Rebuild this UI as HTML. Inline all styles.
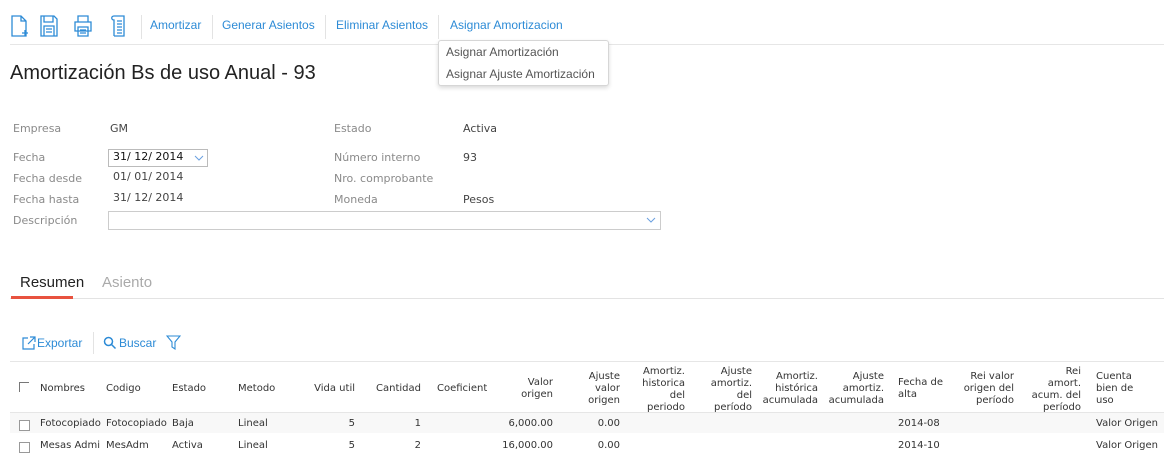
<!DOCTYPE html><html><head><meta charset="utf-8"><style>
*{margin:0;padding:0;box-sizing:border-box}
body{width:1164px;height:455px;overflow:hidden;background:#fff;position:relative;font-family:"Liberation Sans",sans-serif}
.a{position:absolute;white-space:nowrap}
.tb{font-size:12px;color:#2d8bd6;top:18px}
.sep{position:absolute;width:1px;background:#e3e3e3}
.lb{font-family:"DejaVu Sans",sans-serif;font-size:11px;color:#8a8a8a}
.vl{font-family:"DejaVu Sans",sans-serif;font-size:11px;color:#444}
.t{font-family:"DejaVu Sans",sans-serif;font-size:10px;color:#333;line-height:12px}
.r{text-align:right}
.cb{position:absolute;width:11px;height:11px;border:1px solid #999;background:#fff}
</style></head><body>
<!-- icons -->
<svg class="a" style="left:10px;top:14px" width="125" height="24" viewBox="0 0 125 24" fill="none" stroke="#2d8bd6" stroke-width="1.3">
<path d="M2 2h9l5 5v15H2z M11 2v5h5"/><path d="M12 19h6M15 16v6"/>
<path d="M31 2h13l3 3v17H31z M34 2v6h9V2 M34 12h10v10H34z M36 15h6M36 18h6"/>
<path d="M68 2h10v6H68z M65 8h16v9H65z M68 13h10v9H68z M70 16h6M70 19h6"/>
<path d="M104 2h10v20h-10 M104 2c-3 0-3 4 0 4v16 M107 7h5M107 10h5M107 13h5M107 16h5M107 19h5"/>
</svg>
<div class="sep" style="left:141px;top:15px;height:24px"></div>
<div class="a tb" style="left:150px">Amortizar</div>
<div class="sep" style="left:212px;top:15px;height:24px"></div>
<div class="a tb" style="left:222px">Generar Asientos</div>
<div class="sep" style="left:325px;top:15px;height:24px"></div>
<div class="a tb" style="left:336px">Eliminar Asientos</div>
<div class="sep" style="left:438px;top:15px;height:24px"></div>
<div class="a tb" style="left:450px">Asignar Amortizacion</div>
<div class="a" style="left:10px;top:44px;width:1154px;height:1px;background:#e6e6e6"></div>
<div class="a" style="left:438px;top:40px;width:171px;height:46px;border:1px solid #d6d6d6;border-radius:3px;background:#fff;box-shadow:0 2px 4px rgba(0,0,0,.15)"></div>
<div class="a" style="left:446px;top:45px;font-size:12px;color:#555">Asignar Amortización</div>
<div class="a" style="left:446px;top:67px;font-size:12px;color:#555">Asignar Ajuste Amortización</div>
<div class="a" style="left:10px;top:62px;font-size:20px;color:#222">Amortización Bs de uso Anual - 93</div>
<!-- form -->
<div class="a lb" style="left:13px;top:122px">Empresa</div><div class="a vl" style="left:110px;top:122px">GM</div>
<div class="a lb" style="left:334px;top:122px">Estado</div><div class="a vl" style="left:463px;top:122px">Activa</div>
<div class="a lb" style="left:13px;top:151px">Fecha</div>
<div class="a" style="left:108px;top:149px;width:100px;height:18px;border:1px solid #bbb"></div>
<div class="a vl" style="left:113px;top:150px;color:#111">31/ 12/ 2014</div>
<svg class="a" style="left:194px;top:154px" width="10" height="8"><path d="M1 2l4 4 4-4" stroke="#6aa0e0" fill="none"/></svg>
<div class="a lb" style="left:334px;top:151px">Número interno</div><div class="a vl" style="left:463px;top:151px">93</div>
<div class="a lb" style="left:13px;top:172px">Fecha desde</div><div class="a vl" style="left:113px;top:170px">01/ 01/ 2014</div>
<div class="a lb" style="left:334px;top:172px">Nro. comprobante</div>
<div class="a lb" style="left:13px;top:193px">Fecha hasta</div><div class="a vl" style="left:113px;top:191px">31/ 12/ 2014</div>
<div class="a lb" style="left:334px;top:193px">Moneda</div><div class="a vl" style="left:463px;top:193px">Pesos</div>
<div class="a lb" style="left:13px;top:214px">Descripción</div>
<div class="a" style="left:108px;top:211px;width:553px;height:19px;border:1px solid #ccc"></div>
<svg class="a" style="left:646px;top:216px" width="10" height="8"><path d="M1 2l4 4 4-4" stroke="#6aa0e0" fill="none"/></svg>
<!-- tabs -->
<div class="a" style="left:20px;top:274px;font-size:15px;color:#222">Resumen</div>
<div class="a" style="left:102px;top:274px;font-size:15px;color:#aaa">Asiento</div>
<div class="a" style="left:10px;top:298px;width:1154px;height:1px;background:#e3e3e3"></div>
<div class="a" style="left:11px;top:296px;width:62px;height:3px;background:#e8523f"></div>
<!-- toolbar 2 -->
<svg class="a" style="left:22px;top:336px" width="14" height="14" fill="none" stroke="#2d8bd6" stroke-width="1.2"><path d="M6 2H1v11h11V8 M8 1h5v5 M13 1L6 8"/></svg>
<div class="a" style="left:37px;top:336px;font-size:12px;color:#2d8bd6">Exportar</div>
<div class="sep" style="left:93px;top:332px;height:22px"></div>
<svg class="a" style="left:103px;top:336px" width="14" height="14" fill="none" stroke="#2d8bd6" stroke-width="1.5"><circle cx="5.5" cy="5.5" r="4"/><path d="M8.5 8.5l4 4"/></svg>
<div class="a" style="left:119px;top:336px;font-size:12px;color:#2d8bd6">Buscar</div>
<svg class="a" style="left:166px;top:335px" width="15" height="15" fill="none" stroke="#2d8bd6" stroke-width="1.1"><path d="M1 1h13L9 7v7L6 12V7z"/></svg>
<div class="a" style="left:10px;top:361px;width:1154px;height:1px;background:#e6e6e6"></div>
<!-- header -->
<div class="a" style="left:19px;top:382px;width:10px;height:10px;border-left:1px solid #777;border-top:1px solid #777"></div>
<div class="a t" style="left:40px;top:383px">Nombres</div>
<div class="a t" style="left:106px;top:383px">Codigo</div>
<div class="a t" style="left:172px;top:383px">Estado</div>
<div class="a t" style="left:238px;top:383px">Metodo</div>
<div class="a t r" style="left:300px;width:55px;top:383px">Vida util</div>
<div class="a t r" style="left:360px;width:61px;top:383px">Cantidad</div>
<div class="a t" style="left:437px;top:383px;width:50px;overflow:hidden">Coeficiente</div>
<div class="a t r" style="left:490px;width:63px;top:377px">Valor<br>origen</div>
<div class="a t r" style="left:560px;width:60px;top:371px">Ajuste<br>valor<br>origen</div>
<div class="a t r" style="left:625px;width:60px;top:366px">Amortiz.<br>historica<br>del<br>periodo</div>
<div class="a t r" style="left:690px;width:62px;top:366px">Ajuste<br>amortiz.<br>del<br>período</div>
<div class="a t r" style="left:752px;width:66px;top:371px;overflow:hidden">Amortiz.<br>histórica<br>acumulada</div>
<div class="a t r" style="left:818px;width:66px;top:371px;overflow:hidden">Ajuste<br>amortiz.<br>acumulada</div>
<div class="a t" style="left:898px;top:377px">Fecha de<br>alta</div>
<div class="a t r" style="left:950px;width:64px;top:371px">Rei valor<br>origen del<br>período</div>
<div class="a t r" style="left:1020px;width:61px;top:366px">Rei<br>amort.<br>acum. del<br>período</div>
<div class="a t" style="left:1096px;top:371px">Cuenta<br>bien de<br>uso</div>
<div class="a" style="left:10px;top:412px;width:1154px;height:1px;background:#e6e6e6"></div>
<div class="a" style="left:10px;top:413px;width:1154px;height:20px;background:#f8f8f8"></div>
<!-- rows -->
<div class="cb" style="left:19px;top:420px"></div>
<div class="a t" style="left:40px;top:418px">Fotocopiado</div>
<div class="a t" style="left:106px;top:418px">Fotocopiado</div>
<div class="a t" style="left:172px;top:418px">Baja</div>
<div class="a t" style="left:238px;top:418px">Lineal</div>
<div class="a t r" style="left:300px;width:55px;top:418px">5</div>
<div class="a t r" style="left:360px;width:61px;top:418px">1</div>
<div class="a t r" style="left:480px;width:73px;top:418px">6,000.00</div>
<div class="a t r" style="left:560px;width:60px;top:418px">0.00</div>
<div class="a t" style="left:898px;top:418px">2014-08</div>
<div class="a t" style="left:1096px;top:418px">Valor Origen</div>
<div class="cb" style="left:19px;top:442px"></div>
<div class="a t" style="left:40px;top:440px">Mesas Admi</div>
<div class="a t" style="left:106px;top:440px">MesAdm</div>
<div class="a t" style="left:172px;top:440px">Activa</div>
<div class="a t" style="left:238px;top:440px">Lineal</div>
<div class="a t r" style="left:300px;width:55px;top:440px">5</div>
<div class="a t r" style="left:360px;width:61px;top:440px">2</div>
<div class="a t r" style="left:480px;width:73px;top:440px">16,000.00</div>
<div class="a t r" style="left:560px;width:60px;top:440px">0.00</div>
<div class="a t" style="left:898px;top:440px">2014-10</div>
<div class="a t" style="left:1096px;top:440px">Valor Origen</div>
</body></html>
